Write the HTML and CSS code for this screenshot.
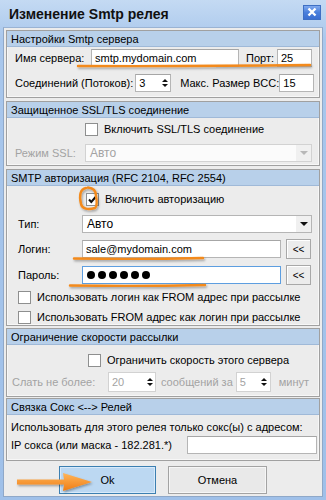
FILE: index.html
```html
<!DOCTYPE html>
<html lang="ru">
<head>
    <meta charset="UTF-8">
    <title>Изменение Smtp релея</title>
    <link rel="stylesheet" href="styles.css">
</head>
<body>
    <div class="window">
        <div class="titlebar">
            <span class="title">Изменение Smtp релея</span>
            <span class="close">
                <svg width="10" height="10" viewBox="0 0 10 10"><path d="M1.5 1.5 L8.5 8.5 M8.5 1.5 L1.5 8.5" stroke="#fff" stroke-width="2.4"/></svg>
            </span>
        </div>

        <div class="client">
            <!-- сервер -->
            <div class="group g1">
                <div class="group-head">Настройки Smtp сервера</div>
                <div class="group-body">
                    <div class="row h18">
                        <span class="lbl w76">Имя сервера:</span>
                        <div class="edit w148">smtp.mydomain.com</div>
                        <span class="lbl ml7">Порт:</span>
                        <div class="edit w35 push">25</div>
                    </div>
                    <div class="row h18 mt7">
                        <span class="lbl">Соединений (Потоков):</span>
                        <div class="edit spin w36 ml2"><span>3</span><span class="arrows"><i class="up"></i><i class="down"></i></span></div>
                        <span class="lbl ml9">Макс. Размер BCC:</span>
                        <div class="edit w35 push">15</div>
                    </div>
                </div>
            </div>

            <!-- ssl -->
            <div class="group g2">
                <div class="group-head">Защищенное SSL/TLS соединение</div>
                <div class="group-body">
                    <div class="row h14 check-row ssl-check">
                        <span class="check"></span>
                        <span class="lbl">Включить SSL/TLS соединение</span>
                    </div>
                    <div class="row h18 mt8">
                        <span class="lbl off w70">Режим SSL:</span>
                        <div class="combo disabled w227"><span>Авто</span><span class="drop"><i></i></span></div>
                    </div>
                </div>
            </div>

            <!-- авторизация -->
            <div class="group g3">
                <div class="group-head">SMTP авторизация (RFC 2104, RFC 2554)</div>
                <div class="group-body">
                    <div class="row h14 check-row auth-check">
                        <span class="check checked">
                            <svg width="11" height="11" viewBox="0 0 11 11"><path d="M2 5.5 L4.3 8 L9 2.5" fill="none" stroke="#111" stroke-width="2"/></svg>
                        </span>
                        <span class="lbl">Включить авторизацию</span>
                    </div>
                    <div class="row h18 mt9 pl3">
                        <span class="lbl w64">Тип:</span>
                        <div class="combo w230"><span>Авто</span><span class="drop"><i></i></span></div>
                    </div>
                    <div class="row h20 mt6 pl3">
                        <span class="lbl w64">Логин:</span>
                        <div class="edit w199">sale@mydomain.com</div>
                        <span class="btn-small">&lt;&lt;</span>
                    </div>
                    <div class="row h20 mt6 pl3">
                        <span class="lbl w64">Пароль:</span>
                        <div class="edit w199 focus">
                            <span class="dots"><i></i><i></i><i></i><i></i><i></i><i></i></span>
                        </div>
                        <span class="btn-small">&lt;&lt;</span>
                    </div>
                    <div class="row h14 mt5 pl3">
                        <span class="check"></span>
                        <span class="lbl ml6">Использовать логин как FROM адрес при рассылке</span>
                    </div>
                    <div class="row h14 mt6 pl3">
                        <span class="check"></span>
                        <span class="lbl ml6">Использовать FROM адрес как логин при рассылке</span>
                    </div>
                </div>
            </div>

            <!-- скорость -->
            <div class="group g4">
                <div class="group-head">Ограничение скорости рассылки</div>
                <div class="group-body">
                    <div class="row h14 check-row speed-check">
                        <span class="check"></span>
                        <span class="lbl">Ограничить скорость этого сервера</span>
                    </div>
                    <div class="row h20 mt5">
                        <span class="lbl off w96">Слать не более:</span>
                        <div class="edit spin disabled w48"><span>20</span><span class="arrows"><i class="up"></i><i class="down"></i></span></div>
                        <span class="lbl off ml5">сообщений за</span>
                        <div class="edit spin disabled w35 ml3"><span>5</span><span class="arrows"><i class="up"></i><i class="down"></i></span></div>
                        <span class="lbl off ml8">минут</span>
                    </div>
                </div>
            </div>

            <!-- сокс -->
            <div class="group g5">
                <div class="group-head">Связка Сокс &lt;--&gt; Релей</div>
                <div class="group-body">
                    <div class="row h14">
                        <span class="lbl">Использовать для этого релея только сокс(ы) с адресом:</span>
                    </div>
                    <div class="row h18 mt2">
                        <span class="lbl">IP сокса (или маска - 182.281.*)</span>
                        <div class="edit w130 push"></div>
                    </div>
                </div>
            </div>

            <div class="buttons">
                <span class="button default">Ok</span>
                <span class="button">Отмена</span>
            </div>
        </div>

        <!-- пометки поверх скриншота -->
        <svg class="marks" width="326" height="500" viewBox="0 0 326 500">
            <defs>
                <filter id="sh" x="-10%" y="-50%" width="120%" height="250%">
                    <feDropShadow dx="1" dy="1.5" stdDeviation="1.2" flood-color="#000" flood-opacity="0.35"/>
                </filter>
                <linearGradient id="arr" x1="0" y1="0" x2="0" y2="1">
                    <stop offset="0" stop-color="#ffb55a"/>
                    <stop offset="1" stop-color="#ef7d14"/>
                </linearGradient>
            </defs>
            <g fill="none" stroke="#f38a1c" stroke-linecap="round" filter="url(#sh)">
                <path d="M78 66 Q190 66.5 310 65" stroke-width="2.4"/>
                <path d="M74 258.5 Q140 259.5 203 258" stroke-width="2.4"/>
                <path d="M70 285.5 Q140 286.5 205 285" stroke-width="2.4"/>
                <path d="M86 188 C80 189 79 196 81 204 C82 209 88 210 95 208 C97 206 97 201 96 196 C96 191 94 188 88 187.5" stroke-width="2.4"/>
            </g>
            <g filter="url(#sh)">
                <path d="M17 479.5 L64 479.5 L63 473 L92 482 L63 491 L64 484.5 L17 484.5 Z" fill="url(#arr)"/>
            </g>
        </svg>
    </div>
</body>
</html>
```

FILE: styles.css
```css
body {
    margin: 0;
    font-family: "Liberation Sans", Arial, sans-serif;
    font-size: 11px;
    color: #000;
    background: #fff;
}
.window {
    position: relative;
    width: 326px;
    height: 500px;
    box-sizing: border-box;
    padding: 0 3px 3px 3px;
    background: linear-gradient(#c4daf3, #a9c7ec 40px, #9fc0e9);
}
.titlebar {
    height: 27px;
    display: flex;
    align-items: center;
    padding-left: 6px;
}
.title {
    font-size: 14px;
    font-weight: bold;
    color: #111;
}
.close {
    margin-left: auto;
    margin-right: 2px;
    margin-top: -3px;
    width: 18px;
    height: 15px;
    display: flex;
    align-items: center;
    justify-content: center;
    box-sizing: border-box;
    border: 1px solid #3e6fc4;
    background: linear-gradient(#7fa9ee, #4a7fdc 50%, #3b6fd1);
}
.client {
    height: 470px;
    box-sizing: border-box;
    padding: 2px 2px 4px 2px;
    background: #ececec;
    border: 1px solid #8fa8c8;
    border-top-color: #9ab3d3;
}

/* группы */
.group {
    border: 1px solid #a0a0a0;
    box-shadow: inset 0 0 0 1px #f7f7f7;
}
.g2, .g3 { margin-top: 3px; }
.g4 { margin-top: 2px; }
.g5 { margin-top: 1px; }
.group-head {
    height: 16px;
    line-height: 16px;
    padding-left: 4px;
    background: #b8d0ea;
    border-bottom: 1px solid #9fb9d8;
    box-sizing: border-box;
}
.g1 .group-body { padding: 2px 7px 5px 8px; }
.g2 .group-body { padding: 4px 9px 3px 8px; }
.g3 .group-body { padding: 6px 8px 1px 8px; }
.g4 .group-body { padding: 8px 9px 4px 5px; }
.g5 .group-body { padding: 5px 2px 6px 4px; }

.row {
    display: flex;
    align-items: center;
}
.h14 { height: 14px; }
.h18 { height: 18px; }
.h20 { height: 20px; }
.mt2 { margin-top: 2px; }
.mt5 { margin-top: 5px; }
.mt6 { margin-top: 6px; }
.mt7 { margin-top: 7px; }
.mt8 { margin-top: 8px; }
.mt9 { margin-top: 9px; }
.ml2 { margin-left: 2px; }
.ml3 { margin-left: 3px; }
.ml5 { margin-left: 5px; }
.ml6 { margin-left: 6px; }
.ml7 { margin-left: 7px; }
.ml8 { margin-left: 8px; }
.ml9 { margin-left: 9px; }
.pl3 { padding-left: 3px; }
.push { margin-left: auto; }

.lbl { white-space: nowrap; }
.lbl.off { color: #a3a3a3; }
.w64 { width: 64px; flex: none; }
.w70 { width: 70px; flex: none; }
.w76 { width: 76px; flex: none; }
.w96 { width: 96px; flex: none; }

/* поля ввода */
.edit {
    height: 18px;
    box-sizing: border-box;
    border: 1px solid #b5b5b5;
    border-top-color: #a6a6a6;
    background: #fff;
    padding: 0 3px;
    line-height: 16px;
    display: flex;
    align-items: center;
    flex: none;
}
.edit.focus { border-color: #5d9ee0; }
.edit.disabled { color: #a3a3a3; border-color: #d2d2d2; }
.w35 { width: 35px; }
.w36 { width: 36px; }
.w48 { width: 48px; }
.w130 { width: 130px; }
.w148 { width: 148px; }
.w199 { width: 199px; }
.w227 { width: 227px; }
.w230 { width: 230px; }
.g4 .edit { height: 20px; }
.dots {
    display: flex;
    gap: 3px;
    padding-left: 1px;
}
.dots i {
    width: 8px;
    height: 8px;
    border-radius: 50%;
    background: #000;
}

.spin { padding-right: 1px; }
.spin .arrows {
    margin-left: auto;
    display: flex;
    flex-direction: column;
    gap: 2px;
    width: 9px;
    align-items: center;
}
.spin i {
    display: block;
    width: 0;
    height: 0;
    border-left: 3px solid transparent;
    border-right: 3px solid transparent;
}
.spin i.up { border-bottom: 3px solid #111; }
.spin i.down { border-top: 3px solid #111; }

.combo {
    height: 18px;
    box-sizing: border-box;
    border: 1px solid #b5b5b5;
    background: #fff;
    display: flex;
    align-items: center;
    padding-left: 4px;
    font-size: 12px;
    flex: none;
}
.combo .drop {
    margin-left: auto;
    width: 15px;
    height: 16px;
    background: #f0f0f0;
    display: flex;
    align-items: center;
    justify-content: center;
}
.combo .drop i {
    width: 0;
    height: 0;
    border-left: 4px solid transparent;
    border-right: 4px solid transparent;
    border-top: 4px solid #111;
}
.combo.disabled {
    color: #a3a3a3;
    border-color: #d2d2d2;
    background: #fbfbfb;
}
.combo.disabled .drop i { border-top-color: #b8b8b8; }

.btn-small {
    margin-left: 5px;
    width: 27px;
    height: 20px;
    box-sizing: border-box;
    border: 1px solid #a8a8a8;
    background: #ececec;
    box-shadow: inset 1px 1px 0 #fff;
    font-size: 10px;
    display: flex;
    align-items: center;
    justify-content: center;
}

/* флажки */
.check {
    width: 13px;
    height: 13px;
    box-sizing: border-box;
    border: 1px solid #8e8f8f;
    background: #fff;
    flex: none;
    display: flex;
    align-items: center;
    justify-content: center;
}
.check-row .check { margin-right: 6px; }
.ssl-check { padding-left: 70px; }
.auth-check { padding-left: 71px; }
.speed-check { padding-left: 76px; }

/* кнопки */
.buttons {
    margin-top: 5px;
    display: flex;
    justify-content: center;
    gap: 12px;
}
.button {
    width: 99px;
    height: 28px;
    box-sizing: border-box;
    border: 1px solid #a3a3a3;
    background: #e9e9e9;
    box-shadow: inset 0 0 0 1px #f6f6f6;
    display: flex;
    align-items: center;
    justify-content: center;
}
.button.default {
    width: 97px;
    border-color: #3c7fb1;
    background: #bcd8f2;
    box-shadow: inset 0 0 0 1px #d8eafa;
}

.marks {
    position: absolute;
    left: 0;
    top: 0;
    pointer-events: none;
}
```
